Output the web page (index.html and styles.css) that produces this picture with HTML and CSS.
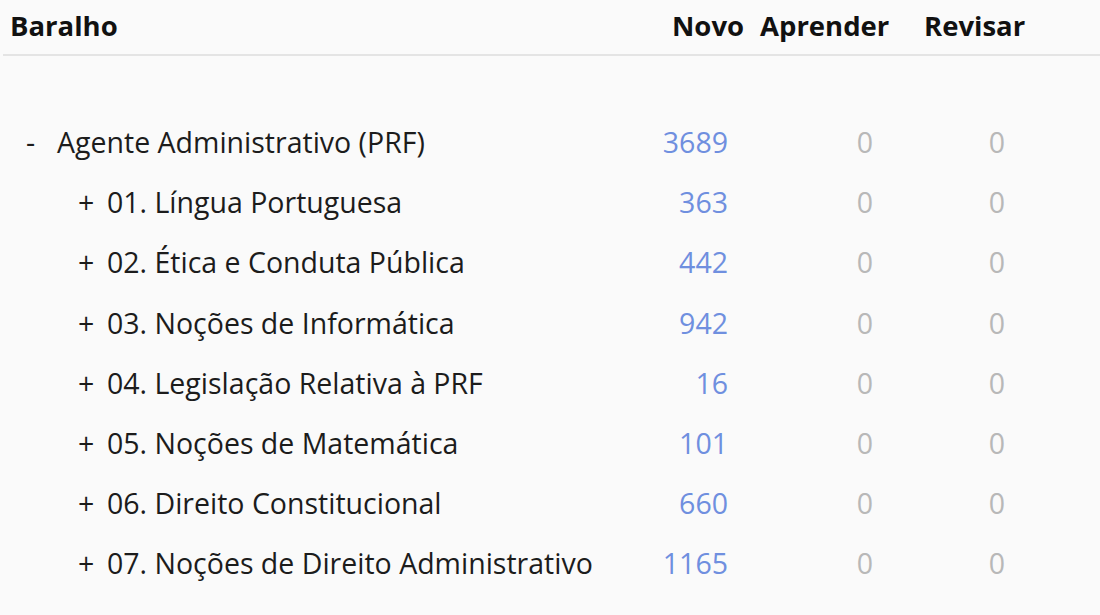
FILE: index.html
```html
<!DOCTYPE html>
<html lang="pt">
<head>
<meta charset="utf-8">
<link rel="stylesheet" href="styles.css">
</head>
<body>
<div class="header">
  <div class="h-name">Baralho</div>
  <div class="h-novo">Novo</div>
  <div class="h-apr">Aprender</div>
  <div class="h-rev">Revisar</div>
</div>
<div class="decks">
  <div class="row parent">
    <div class="name"><span class="toggle">-</span><span class="title">Agente Administrativo (PRF)</span></div>
    <div class="c-new">3689</div><div class="c-lrn">0</div><div class="c-rev">0</div>
  </div>
  <div class="row child">
    <div class="name"><span class="toggle">+</span><span class="title">01. Língua Portuguesa</span></div>
    <div class="c-new">363</div><div class="c-lrn">0</div><div class="c-rev">0</div>
  </div>
  <div class="row child">
    <div class="name"><span class="toggle">+</span><span class="title">02. Ética e Conduta Pública</span></div>
    <div class="c-new">442</div><div class="c-lrn">0</div><div class="c-rev">0</div>
  </div>
  <div class="row child">
    <div class="name"><span class="toggle">+</span><span class="title">03. Noções de Informática</span></div>
    <div class="c-new">942</div><div class="c-lrn">0</div><div class="c-rev">0</div>
  </div>
  <div class="row child">
    <div class="name"><span class="toggle">+</span><span class="title">04. Legislação Relativa à PRF</span></div>
    <div class="c-new">16</div><div class="c-lrn">0</div><div class="c-rev">0</div>
  </div>
  <div class="row child">
    <div class="name"><span class="toggle">+</span><span class="title">05. Noções de Matemática</span></div>
    <div class="c-new">101</div><div class="c-lrn">0</div><div class="c-rev">0</div>
  </div>
  <div class="row child">
    <div class="name"><span class="toggle">+</span><span class="title">06. Direito Constitucional</span></div>
    <div class="c-new">660</div><div class="c-lrn">0</div><div class="c-rev">0</div>
  </div>
  <div class="row child">
    <div class="name"><span class="toggle">+</span><span class="title">07. Noções de Direito Administrativo</span></div>
    <div class="c-new">1165</div><div class="c-lrn">0</div><div class="c-rev">0</div>
  </div>
</div>
</body>
</html>
```
FILE: styles.css
```css
html, body {
  margin: 0;
  padding: 0;
  background: #fafafa;
  font-family: "Open Sans", "Noto Sans", sans-serif;
  color: #1c1c1c;
}
.header {
  display: flex;
  align-items: center;
  height: 51px;
  padding-bottom: 3px;
  margin-left: 3px;
  border-bottom: 2px solid #e4e4e4;
  font-weight: 700;
  font-size: 27.5px;
  color: #111;
}
.h-name { flex: 1; padding-left: 7px; }
.h-novo { width: 88px; }
.h-apr { width: 164px; }
.h-rev { width: 176px; }
.decks {
  padding-top: 56px;
}
.row {
  display: flex;
  align-items: center;
  height: 60.2px;
  font-size: 28.5px;
  padding-right: 95px;
}
.name { flex: 1; display: flex; white-space: nowrap; }
.toggle { flex: none; }
.parent .toggle { padding-left: 26px; width: 31px; }
.child .toggle { padding-left: 78px; width: 29px; }
.c-new { width: 100px; text-align: right; color: #6f8fdf; }
.c-lrn { width: 145px; text-align: right; color: #b8b8b8; }
.c-rev { width: 132px; text-align: right; color: #b8b8b8; }
```
